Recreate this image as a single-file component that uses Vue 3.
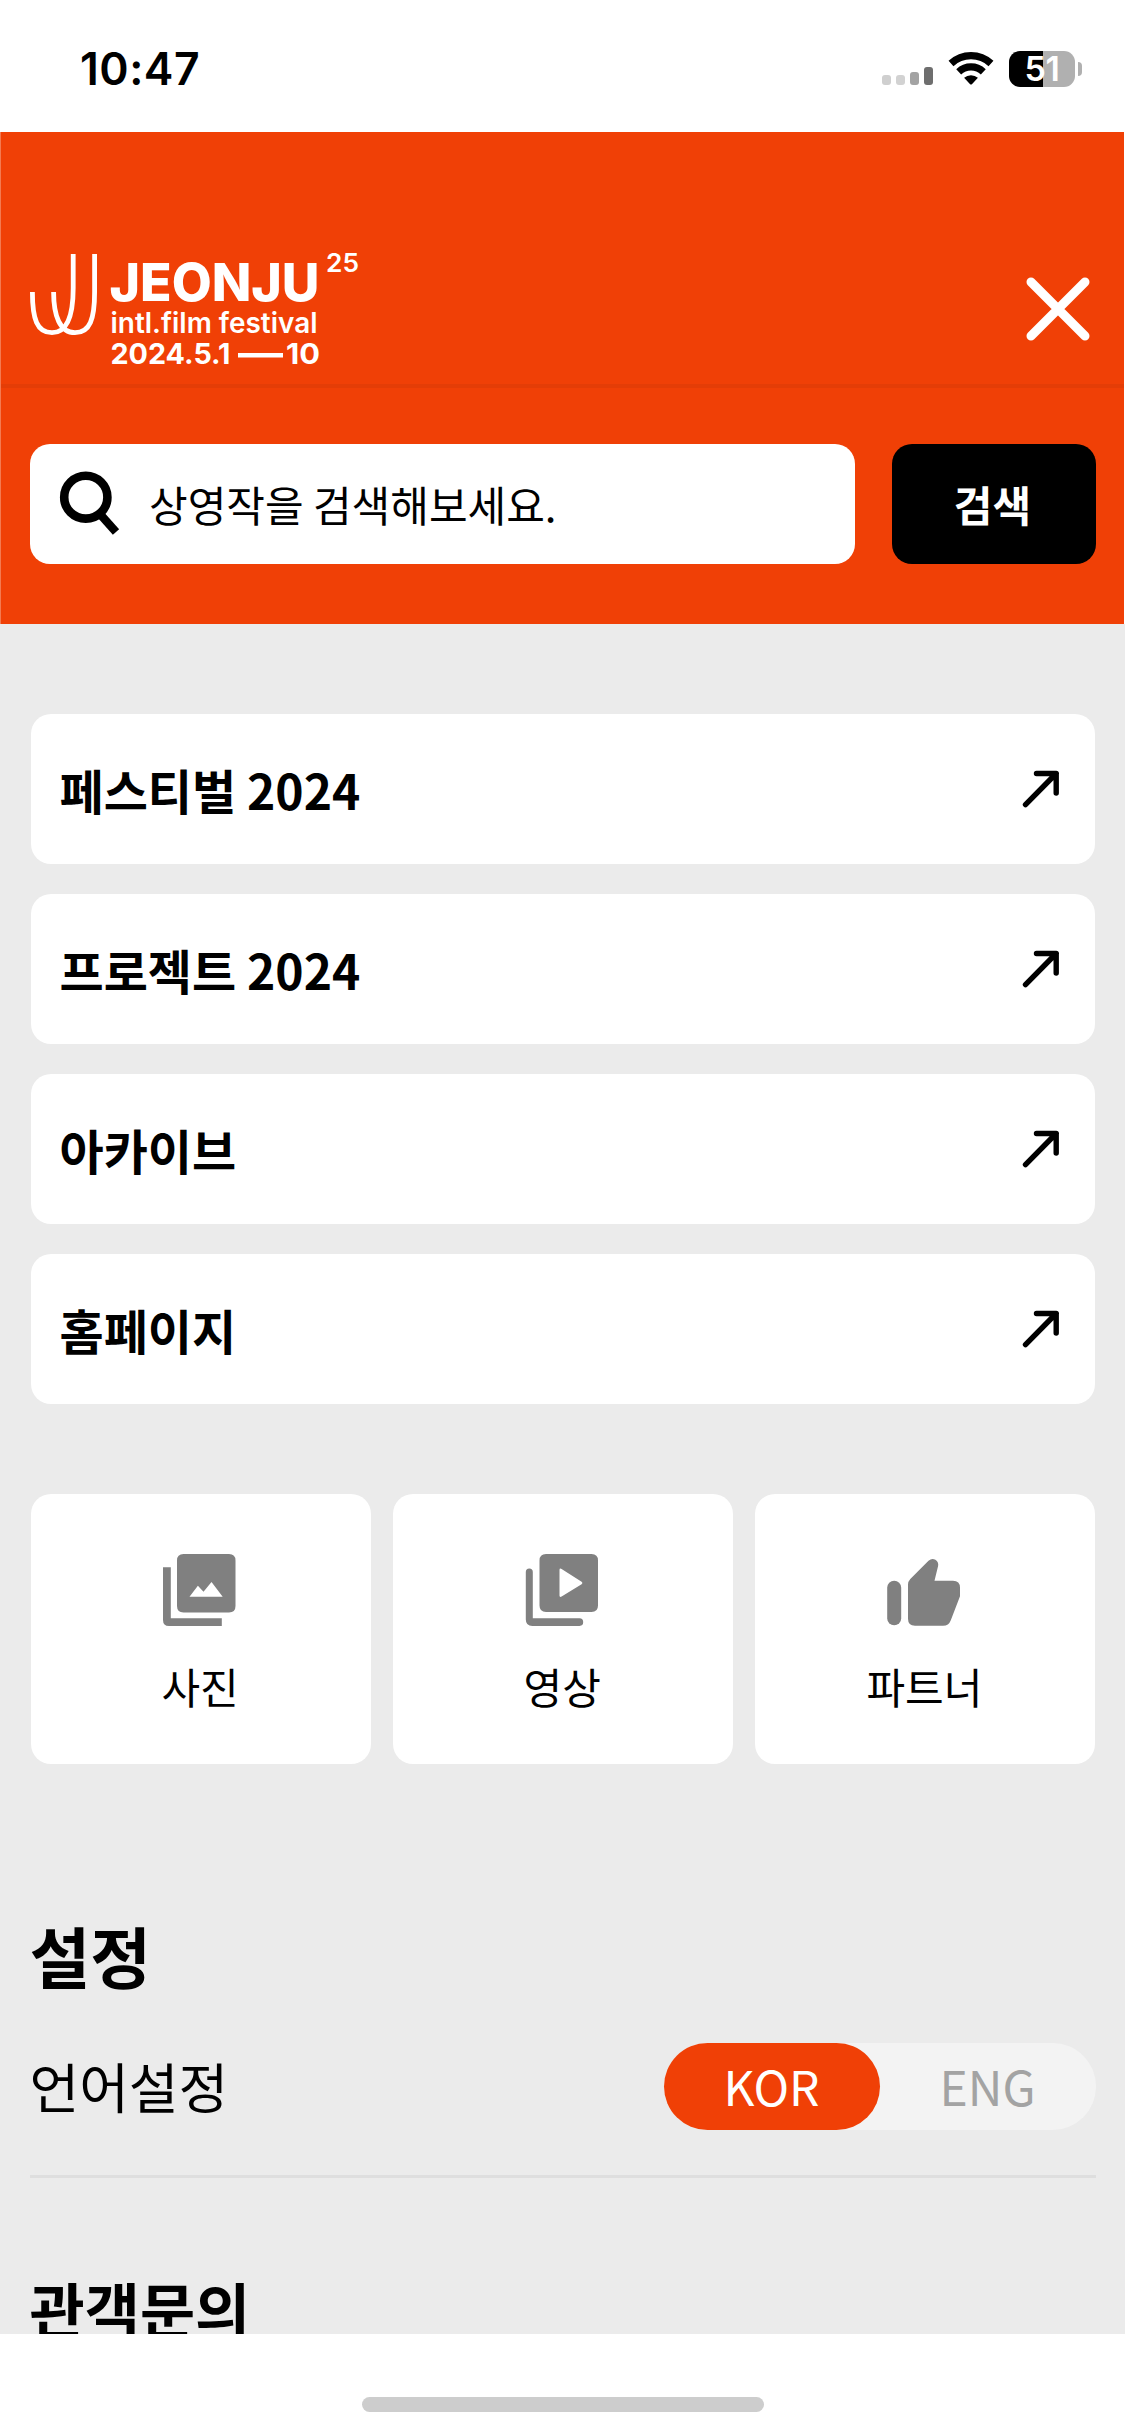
<script setup>
import { ref } from 'vue'

const menu = ['페스티벌 2024', '프로젝트 2024', '아카이브', '홈페이지']
const languages = ['KOR', 'ENG']
const language = ref('KOR')
</script>

<template>
  <div class="screen">
    <header class="status">
      <span class="time">10:47</span>
      <div class="indicators">
        <div class="signal"><i class="b1"></i><i class="b2"></i><i class="b3"></i><i class="b4"></i></div>
        <svg class="wifi" width="48" height="36" viewBox="-24 -34 48 36">
          <path d="M-20 -21.5A29.4 29.4 0 0 1 20 -21.5" fill="none" stroke="#000" stroke-width="7.2" />
          <path d="M-12.3 -13.2A18 18 0 0 1 12.3 -13.2" fill="none" stroke="#000" stroke-width="7.2" />
          <path d="M-6.9 -7.2A10.4 10.4 0 0 1 6.9 -7.2L.9 -.8Q0 0 -.9 -.8Z" />
        </svg>
        <div class="battery"><span>51</span></div>
        <i class="nub"></i>
      </div>
    </header>

    <section class="hero">
      <div class="brand">
        <svg class="logo" width="352" height="120" viewBox="30 250 352 120" fill="#fff">
          <g fill="none" stroke="#fff" stroke-width="4.8">
            <path d="M32.4 292C32.4 319 37 332.7 52 332.7C69 332.7 73.2 312 73.2 288V254" />
            <path d="M53.6 292C53.6 316 60 332.7 75 332.7C90 332.7 94.6 319 94.6 292V254" />
          </g>
          <text x="109.5" y="301.4" font-size="52" font-weight="800" textLength="210" lengthAdjust="spacingAndGlyphs">JEONJU</text>
          <text x="110.5" y="333" font-size="28" font-weight="600" textLength="207" lengthAdjust="spacingAndGlyphs">intl.film festival</text>
          <text x="110.5" y="364.2" font-size="28.5" font-weight="700" textLength="120" lengthAdjust="spacingAndGlyphs">2024.5.1</text>
          <path d="M238 353h45v4.400h-45z" />
          <text x="286" y="364.2" font-size="28.5" font-weight="700" textLength="34" lengthAdjust="spacingAndGlyphs">10</text>
          <text x="326" y="272.4" font-size="26" font-weight="600" textLength="33" lengthAdjust="spacingAndGlyphs">25</text>
        </svg>
        <svg class="close" width="66" height="66" viewBox="0 0 66 66" stroke="#fff" stroke-width="9" stroke-linecap="round">
          <path d="M6 6L60 60M60 6L6 60" />
        </svg>
      </div>
      <div class="search">
        <div class="field">
          <svg width="62" height="68" viewBox="58 469 62 68" fill="none" stroke="#000">
            <ellipse cx="85.8" cy="497.2" rx="21.6" ry="21.4" stroke-width="8.6" />
            <path d="M99.500 513.500L116 532" stroke-width="8.4" />
          </svg>
          <span>상영작을 검색해보세요.</span>
        </div>
        <button class="go">검색</button>
      </div>
    </section>

    <main class="content">
      <nav class="menu">
        <a v-for="item in menu" :key="item" class="row">
          <span>{{ item }}</span>
          <svg width="38" height="38" viewBox="0 0 38 38" fill="none" stroke="#000" stroke-width="5.4" stroke-linecap="round" stroke-linejoin="round">
            <path d="M14.500 3.500H34.200V23M34.200 3.500L3.500 34.600" />
          </svg>
        </a>
      </nav>

      <div class="tiles">
        <a class="tile">
          <svg width="74" height="74" viewBox="163.500 1553 74 74" fill="#808080">
            <path fill-rule="evenodd" d="M184 1554h45.500q6.500 0 6.500 6.500v45.500q0 6.500-6.500 6.500h-45.500q-6.500 0-6.500-6.500v-45.500q0-6.500 6.500-6.500zM190 1596.700h33.200l-11.200-14.700-8 9.800-5.600-6z" />
            <path d="M163.500 1567.300h7.800v50.900h51v7.800h-52.800q-6 0-6-6z" />
          </svg>
          <span>사진</span>
        </a>
        <a class="tile">
          <svg width="74" height="74" viewBox="526 1553 74 74" fill="#808080">
            <path fill-rule="evenodd" d="M547 1554h45.500q6.500 0 6.500 6.500v45q0 6.500-6.500 6.500h-45.500q-6.500 0-6.500-6.500v-45q0-6.500 6.500-6.500zM560.500 1570v25.500q0 2.200 2.100 1l20-12.200q1.800-1.300 0-2.600l-20-12.800q-2.100-1.100-2.100 1.100z" />
            <path d="M526.800 1572q0-3.500 3.500-3.500t3.500 3.500v46.300h46.700q3.700 0 3.700 3.800t-3.700 3.900h-47.200q-6.500 0-6.500-6.500z" />
          </svg>
          <span>영상</span>
        </a>
        <a class="tile">
          <svg width="74" height="74" viewBox="888 1553 74 74" fill="#808080">
            <rect x="888.2" y="1580.700" width="14" height="44.600" rx="7" />
            <path d="M909 1584.500q0-3 2.300-5.500l18.200-18.300q3.400-3 6.900-1 3.500 2.300 2.700 6.300l-3.600 14.700h18.500q7 0 7 7v8.500l-9.200 24q-2 5.500-7.800 5.500h-28q-7 0-7-7z" />
          </svg>
          <span>파트너</span>
        </a>
      </div>

      <h2>설정</h2>
      <div class="setting">
        <span class="name">언어설정</span>
        <div class="toggle">
          <button v-for="l in languages" :key="l" :class="{ on: l === language }" @click="language = l">{{ l }}</button>
        </div>
      </div>
      <h2 class="inquiry">관객문의</h2>
    </main>
    <footer class="home"><i></i></footer>
  </div>
</template>

<style>
body { background: #fff; }
</style>

<style scoped>
.screen {
  width: 1125px;
  height: 2436px;
  display: flex;
  flex-direction: column;
  overflow: hidden;
  background: #fff;
  color: #000;
  font-family: "Noto Sans CJK KR", sans-serif;
}
.screen * { box-sizing: border-box; }
.status {
  height: 132px;
  flex: none;
  display: flex;
  justify-content: space-between;
  padding: 0 43px 0 80px;
  font-family: Inter, sans-serif;
}
.time { font-size: 44.500px; font-weight: 600; line-height: 54px; margin-top: 42px; letter-spacing: 0.5px; }
.indicators { display: flex; align-items: flex-start; }
.signal { display: flex; align-items: flex-end; gap: 5px; height: 18px; margin-top: 67px; }
.signal i { width: 9px; border-radius: 3px; }
.b1 { height: 10px; background: #cfcfcf; }
.b2 { height: 10px; background: #d2d2d2; }
.b3 { height: 13px; background: #a3a3a3; }
.b4 { height: 18px; background: #6e6e6e; }
.wifi { margin: 51px 0 0 14px; }
.battery {
  width: 66px;
  height: 36px;
  margin: 51px 0 0 14px;
  border-radius: 11px;
  background: linear-gradient(90deg, #000 34px, #b0b0b0 34px);
  color: #fff;
  font-size: 34px;
  font-weight: 600;
  line-height: 36px;
  text-align: center;
  letter-spacing: -0.5px;
}
.nub { width: 4px; height: 14px; margin: 62px 0 0 3px; border-radius: 0 5px 5px 0; background: #b0b0b0; }

.hero { width: 1124px; height: 492px; flex: none; background: #f04006; border-left: 1px solid #f47a51; }
.brand {
  height: 256px;
  display: flex;
  justify-content: space-between;
  border-bottom: 4px solid #e43d06;
  padding: 118px 33.500px 0 29px;
}
.logo { font-family: Inter, sans-serif; }
.close { margin-top: 26px; }
.search { display: flex; justify-content: space-between; padding: 56px 28.500px 0 29px; }
.field {
  width: 825px;
  height: 120px;
  border-radius: 20px;
  background: #fff;
  display: flex;
  align-items: center;
  gap: 29px;
  padding-left: 28px;
  font-size: 42px;
}
.field svg { margin-bottom: 2px; }
.field span { margin-bottom: 2px; }
.go {
  width: 204px;
  height: 120px;
  border: 0;
  border-radius: 20px;
  background: #000;
  color: #fff;
  font: 700 42px "Noto Sans CJK KR", sans-serif;
  padding: 0 2px 2px 0;
}

.content { height: 1710px; flex: none; overflow: hidden; background: #ebebeb; padding: 90px 30px 0 30.500px; }
.menu { display: flex; flex-direction: column; gap: 30px; }
.row {
  height: 150px;
  border-radius: 20px;
  background: #fff;
  display: flex;
  align-items: center;
  justify-content: space-between;
  padding: 0 35px 0 29px;
  font-size: 48px;
  font-weight: 700;
}
.tiles { display: flex; gap: 22px; margin-top: 90px; }
.tile {
  flex: 1;
  height: 270px;
  border-radius: 20px;
  background: #fff;
  display: flex;
  flex-direction: column;
  align-items: center;
  padding-top: 59px;
  padding-right: 1px;
  font-size: 42px;
  line-height: 62px;
}
.tile span { margin-top: 28px; }
h2 { margin: 142px 0 0 -1px; font-size: 66px; line-height: 96px; font-weight: 700; }
.setting {
  display: flex;
  align-items: flex-start;
  justify-content: space-between;
  height: 143px;
  margin: 33px -1px 0 -1px;
  padding-top: 8px;
  border-bottom: 3px solid #dedede;
}
.name { font-size: 54px; line-height: 80px; margin-top: 3px; }
.toggle { width: 432px; height: 87px; border-radius: 44px; background: #f3f3f3; display: flex; }
.toggle button {
  flex: 1;
  border: 0;
  padding: 0 1px 3px 0;
  border-radius: 44px;
  background: none;
  color: #a3a3a3;
  font: 400 48px "Noto Sans CJK KR", sans-serif;
}
.toggle .on { background: #f04006; color: #fff; }
.inquiry { margin-top: 82px; font-size: 60px; }
.home { flex: 1; display: flex; justify-content: center; padding-top: 63px; }
.home i { width: 402px; height: 15px; border-radius: 8px; background: #cdcdcd; }
</style>
